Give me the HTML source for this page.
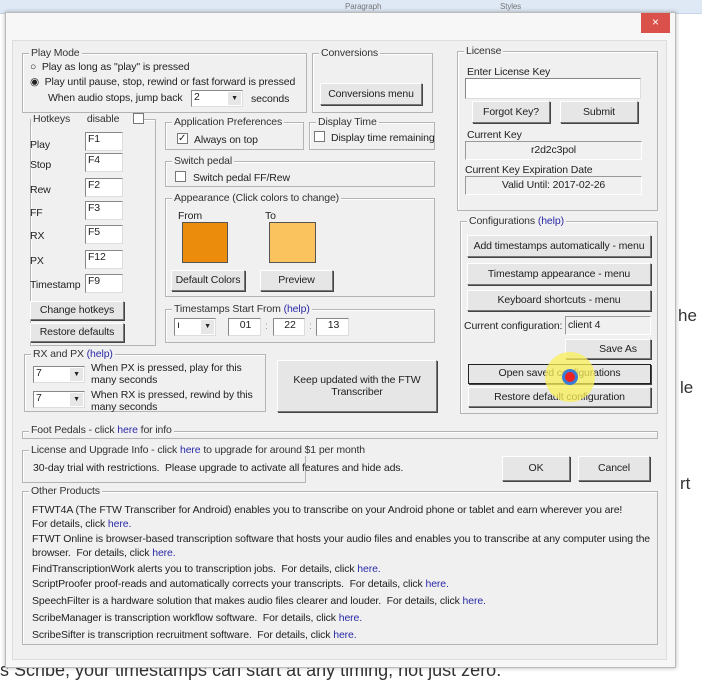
<!DOCTYPE html>
<html><head><meta charset="utf-8"><style>
*{box-sizing:border-box;margin:0;padding:0}
body{width:702px;height:690px;overflow:hidden;background:#fff;position:relative;font-family:"Liberation Sans",sans-serif;font-size:10.5px;color:#222;letter-spacing:-0.12px}
.a{position:absolute;white-space:nowrap}
.g{position:absolute;border:1px solid #b4b4b4;box-shadow:inset 1px 1px 0 #fff}
.l{position:absolute;background:#f0f0f0;padding:0 2px;top:-7px;left:6px;white-space:nowrap;color:#333}
.b{position:absolute;background:#e6e6e6;border:1px solid #fff;border-right-color:#777;border-bottom-color:#777;box-shadow:1px 1px 0 #444;text-align:center;white-space:nowrap;color:#222}
.i{position:absolute;background:#fff;border:1px solid #888;border-right-color:#ddd;border-bottom-color:#ddd;padding-left:2px;white-space:nowrap}
.ro{position:absolute;background:#f0f0f0;border:1px solid #999;border-right-color:#fff;border-bottom-color:#fff;text-align:center}
.h{color:#2a2aa8}
.cb{position:absolute;width:11px;height:11px;background:#fff;border:1px solid #777}
.dd{position:absolute;right:1px;top:1px;bottom:1px;width:13px;background:#e6e6e6;font-size:7px;text-align:center;line-height:14px}
</style></head><body>
<div class="a" style="left:0;top:0;width:702px;height:14px;background:#dfe9f5;border-bottom:1px solid #c5d4e8"></div>
<div class="a" style="left:345px;top:2px;color:#777;font-size:8px">Paragraph</div>
<div class="a" style="left:500px;top:2px;color:#777;font-size:8px">Styles</div>
<div class="a" style="left:0;top:660px;font-size:18px;color:#333;letter-spacing:0">s Scribe, your timestamps can start at any timing, not just zero.</div>
<div class="a" style="left:678px;top:306px;font-size:17px;color:#333;letter-spacing:0">he</div>
<div class="a" style="left:680px;top:378px;font-size:17px;color:#333;letter-spacing:0">le</div>
<div class="a" style="left:680px;top:474px;font-size:17px;color:#333;letter-spacing:0">rt</div>

<div class="a" style="left:5px;top:12px;width:671px;height:656px;background:#f7f7f7;border:1px solid #bbb;box-shadow:0 0 4px rgba(0,0,0,.3)"></div>
<div class="a" style="left:641px;top:13px;width:29px;height:20px;background:#d9514a;color:#fff;text-align:center;line-height:19px;font-size:12px">×</div>
<div class="a" style="left:12px;top:40px;width:655px;height:620px;background:#f0f0f0;border:1px solid #ddd"></div>

<!-- Play mode -->
<div class="g" style="left:22px;top:53px;width:285px;height:60px"><span class="l">Play Mode</span></div>
<div class="a" style="left:30px;top:61px">○&nbsp; Play as long as "play" is pressed</div>
<div class="a" style="left:30px;top:76px">◉&nbsp; Play until pause, stop, rewind or fast forward is pressed</div>
<div class="a" style="left:48px;top:92px">When audio stops, jump back</div>
<div class="i" style="left:191px;top:90px;width:52px;height:17px">2<span class="dd">▼</span></div>
<div class="a" style="left:251px;top:93px">seconds</div>

<div class="g" style="left:312px;top:53px;width:121px;height:60px"><span class="l">Conversions</span></div>
<div class="b" style="left:320px;top:83px;width:102px;height:22px;line-height:20px">Conversions menu</div>

<!-- License -->
<div class="g" style="left:457px;top:51px;width:201px;height:160px"><span class="l">License</span></div>
<div class="a" style="left:467px;top:66px">Enter License Key</div>
<div class="i" style="left:465px;top:78px;width:176px;height:21px"></div>
<div class="b" style="left:472px;top:101px;width:78px;height:22px;line-height:20px">Forgot Key?</div>
<div class="b" style="left:560px;top:101px;width:78px;height:22px;line-height:20px">Submit</div>
<div class="a" style="left:467px;top:129px">Current Key</div>
<div class="ro" style="left:465px;top:141px;width:177px;height:19px;line-height:17px">r2d2c3pol</div>
<div class="a" style="left:465px;top:164px">Current Key Expiration Date</div>
<div class="ro" style="left:465px;top:176px;width:177px;height:19px;line-height:17px">Valid Until: 2017-02-26</div>

<!-- Hotkeys -->
<div class="g" style="left:30px;top:119px;width:126px;height:227px"><span class="l" style="left:0">Hotkeys &nbsp;&nbsp;&nbsp;&nbsp;&nbsp;disable&nbsp;&nbsp;&nbsp;&nbsp;&nbsp;&nbsp;</span></div>
<div class="cb" style="left:133px;top:113px"></div>
<div class="a" style="left:30px;top:139px">Play</div><div class="i" style="left:85px;top:132px;width:38px;height:19px">F1</div>
<div class="a" style="left:30px;top:159px">Stop</div><div class="i" style="left:85px;top:153px;width:38px;height:19px">F4</div>
<div class="a" style="left:30px;top:184px">Rew</div><div class="i" style="left:85px;top:178px;width:38px;height:19px">F2</div>
<div class="a" style="left:30px;top:207px">FF</div><div class="i" style="left:85px;top:201px;width:38px;height:19px">F3</div>
<div class="a" style="left:30px;top:230px">RX</div><div class="i" style="left:85px;top:225px;width:38px;height:19px">F5</div>
<div class="a" style="left:30px;top:255px">PX</div><div class="i" style="left:85px;top:250px;width:38px;height:19px">F12</div>
<div class="a" style="left:30px;top:279px">Timestamp</div><div class="i" style="left:85px;top:274px;width:38px;height:19px">F9</div>
<div class="b" style="left:30px;top:301px;width:94px;height:19px;line-height:17px">Change hotkeys</div>
<div class="b" style="left:30px;top:323px;width:94px;height:19px;line-height:17px">Restore defaults</div>

<!-- right-middle -->
<div class="g" style="left:165px;top:122px;width:139px;height:28px"><span class="l">Application Preferences</span></div>
<div class="cb" style="left:177px;top:133px;font-size:10px;line-height:9px">✓</div>
<div class="a" style="left:194px;top:134px">Always on top</div>
<div class="g" style="left:309px;top:122px;width:126px;height:28px"><span class="l">Display Time</span></div>
<div class="cb" style="left:314px;top:131px"></div>
<div class="a" style="left:331px;top:132px">Display time remaining</div>

<div class="g" style="left:165px;top:161px;width:270px;height:26px"><span class="l">Switch pedal</span></div>
<div class="cb" style="left:175px;top:171px"></div>
<div class="a" style="left:193px;top:172px">Switch pedal FF/Rew</div>

<div class="g" style="left:165px;top:198px;width:270px;height:99px"><span class="l">Appearance (Click colors to change)</span></div>
<div class="a" style="left:178px;top:210px">From</div>
<div class="a" style="left:265px;top:210px">To</div>
<div class="a" style="left:182px;top:222px;width:46px;height:41px;background:#ec8c0c;border:1px solid #555"></div>
<div class="a" style="left:269px;top:222px;width:47px;height:41px;background:#fbc35e;border:1px solid #555"></div>
<div class="b" style="left:171px;top:270px;width:74px;height:21px;line-height:19px">Default Colors</div>
<div class="b" style="left:260px;top:270px;width:73px;height:21px;line-height:19px">Preview</div>

<div class="g" style="left:165px;top:309px;width:270px;height:34px"><span class="l">Timestamps Start From <span class="h">(help)</span></span></div>
<div class="i" style="left:174px;top:318px;width:42px;height:18px">ı<span class="dd">▼</span></div>
<div class="i" style="left:228px;top:318px;width:33px;height:18px;text-align:center">01</div>
<div class="a" style="left:265px;top:320px;color:#999">:</div>
<div class="i" style="left:273px;top:318px;width:32px;height:18px;text-align:center">22</div>
<div class="a" style="left:309px;top:320px;color:#999">:</div>
<div class="i" style="left:316px;top:318px;width:33px;height:18px;text-align:center">13</div>

<div class="g" style="left:24px;top:354px;width:242px;height:58px"><span class="l">RX and PX <span class="h">(help)</span></span></div>
<div class="i" style="left:33px;top:366px;width:52px;height:17px">7<span class="dd">▼</span></div>
<div class="a" style="left:91px;top:362px;line-height:12px">When PX is pressed, play for this<br>many seconds</div>
<div class="i" style="left:33px;top:391px;width:52px;height:17px">7<span class="dd">▼</span></div>
<div class="a" style="left:91px;top:389px;line-height:12px">When RX is pressed, rewind by this<br>many seconds</div>
<div class="b" style="left:277px;top:360px;width:160px;height:52px;line-height:12px;padding-top:13px">Keep updated with the FTW<br>Transcriber</div>

<!-- Configurations -->
<div class="g" style="left:460px;top:221px;width:198px;height:193px"><span class="l">Configurations <span class="h">(help)</span></span></div>
<div class="b" style="left:467px;top:235px;width:184px;height:22px;line-height:20px">Add timestamps automatically - menu</div>
<div class="b" style="left:467px;top:263px;width:184px;height:22px;line-height:20px">Timestamp appearance - menu</div>
<div class="b" style="left:467px;top:290px;width:184px;height:21px;line-height:19px">Keyboard shortcuts - menu</div>
<div class="a" style="left:464px;top:320px">Current configuration:</div>
<div class="ro" style="left:565px;top:316px;width:86px;height:19px;line-height:17px;text-align:left;padding-left:2px">client 4</div>
<div class="b" style="left:565px;top:339px;width:86px;height:20px;line-height:18px;padding-left:20px">Save As</div>
<div class="b" style="left:468px;top:364px;width:183px;height:20px;line-height:17px;border:1px solid #222">Open saved configurations</div>
<div class="b" style="left:468px;top:387px;width:183px;height:20px;line-height:18px">Restore default configuration</div>
<div class="a" style="left:545px;top:352px;width:50px;height:50px;border-radius:50%;background:rgba(250,240,90,.75)"></div>
<div class="a" style="left:562px;top:369px;width:16px;height:16px;border-radius:50%;background:#e22;border:3px solid #3a7bd5"></div>

<!-- bottom -->
<div class="g" style="left:22px;top:431px;width:636px;height:8px"><span class="l" style="top:-8px">Foot Pedals - click <span class="h">here</span> for info</span></div>
<div class="g" style="left:22px;top:450px;width:284px;height:33px"><span class="l">License and Upgrade Info - click <span class="h">here</span> to upgrade for around $1 per month</span></div>
<div class="a" style="left:33px;top:462px">30-day trial with restrictions.&nbsp; Please upgrade to activate all features and hide ads.</div>
<div class="b" style="left:502px;top:456px;width:68px;height:25px;line-height:23px">OK</div>
<div class="b" style="left:578px;top:456px;width:72px;height:25px;line-height:23px">Cancel</div>

<div class="g" style="left:22px;top:491px;width:636px;height:154px"><span class="l">Other Products</span></div>
<div class="a" style="left:32px;top:503px;line-height:14px">FTWT4A (The FTW Transcriber for Android) enables you to transcribe on your Android phone or tablet and earn wherever you are!<br>For details, click <span class="h">here.</span></div>
<div class="a" style="left:32px;top:532px;line-height:14px">FTWT Online is browser-based transcription software that hosts your audio files and enables you to transcribe at any computer using the<br>browser.&nbsp; For details, click <span class="h">here.</span></div>
<div class="a" style="left:32px;top:563px">FindTranscriptionWork alerts you to transcription jobs.&nbsp; For details, click <span class="h">here.</span></div>
<div class="a" style="left:32px;top:578px">ScriptProofer proof-reads and automatically corrects your transcripts.&nbsp; For details, click <span class="h">here.</span></div>
<div class="a" style="left:32px;top:595px">SpeechFilter is a hardware solution that makes audio files clearer and louder.&nbsp; For details, click <span class="h">here.</span></div>
<div class="a" style="left:32px;top:612px">ScribeManager is transcription workflow software.&nbsp; For details, click <span class="h">here.</span></div>
<div class="a" style="left:32px;top:629px">ScribeSifter is transcription recruitment software.&nbsp; For details, click <span class="h">here.</span></div>
</body></html>
